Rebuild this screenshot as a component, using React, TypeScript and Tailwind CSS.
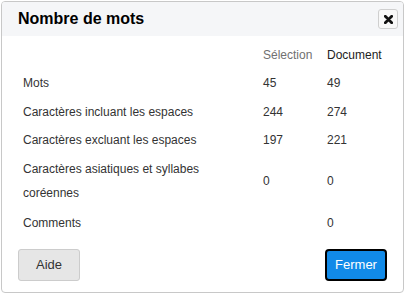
import React from "react";

const rows = [
  { label: "Mots", a: "45", b: "49", h: "h-[28.5px]" },
  { label: "Caractères incluant les espaces", a: "244", b: "274", h: "h-[28.5px]" },
  { label: "Caractères excluant les espaces", a: "197", b: "221", h: "h-[28.5px]" },
  { label: "Caractères asiatiques et syllabes coréennes", a: "0", b: "0", h: "h-[52px]" },
  { label: "Comments", a: "", b: "0", h: "h-[33.5px]" },
];

export default function App() {
  return (
    <div
      className="w-[405px] h-[294px] bg-white overflow-hidden pt-[1px] pl-[1px]"
      style={{ fontFamily: '"Liberation Sans", Arial, sans-serif' }}
    >
      <div className="w-[403px] h-[292px] border border-[#c8c8c8] rounded-[4px] flex flex-col bg-white">
        <div className="h-[34px] bg-[#f5f6f8] rounded-t-[3px] flex items-center justify-between pl-[16px] pr-[5px]">
          <span className="text-[16px] font-bold text-black leading-none">Nombre de mots</span>
          <div className="w-[20px] h-[20px] border border-[#cfcfcf] rounded-[3px] bg-[#f8f8f8] flex items-center justify-center">
            <svg width="9" height="9" viewBox="0 0 9 9">
              <path d="M1.3 1.3 L7.7 7.7 M7.7 1.3 L1.3 7.7" stroke="#111" strokeWidth="2.8" strokeLinecap="round" />
            </svg>
          </div>
        </div>
        <div className="mt-[5px] pl-[21px] text-[12px] text-[#333]">
          <div className="flex items-center h-[28px]">
            <div className="w-[240px]" />
            <div className="w-[64px] text-[#707070]">Sélection</div>
            <div className="text-[#222]">Document</div>
          </div>
          {rows.map((r) => (
            <div key={r.label} className={`flex items-center ${r.h}`}>
              <div className="w-[240px] pr-[12px] leading-[24px]">{r.label}</div>
              <div className="w-[64px]">{r.a}</div>
              <div>{r.b}</div>
            </div>
          ))}
        </div>
        <div className="flex justify-between px-[16px] mt-[9px]">
          <button className="w-[62px] h-[32px] bg-[#e6e6e6] border border-[#cccccc] rounded-[3px] text-[13px] text-[#333]">
            Aide
          </button>
          <button className="w-[62px] h-[32px] bg-[#118ae8] border-2 border-black rounded-[4px] text-[13px] text-white">
            Fermer
          </button>
        </div>
      </div>
    </div>
  );
}
